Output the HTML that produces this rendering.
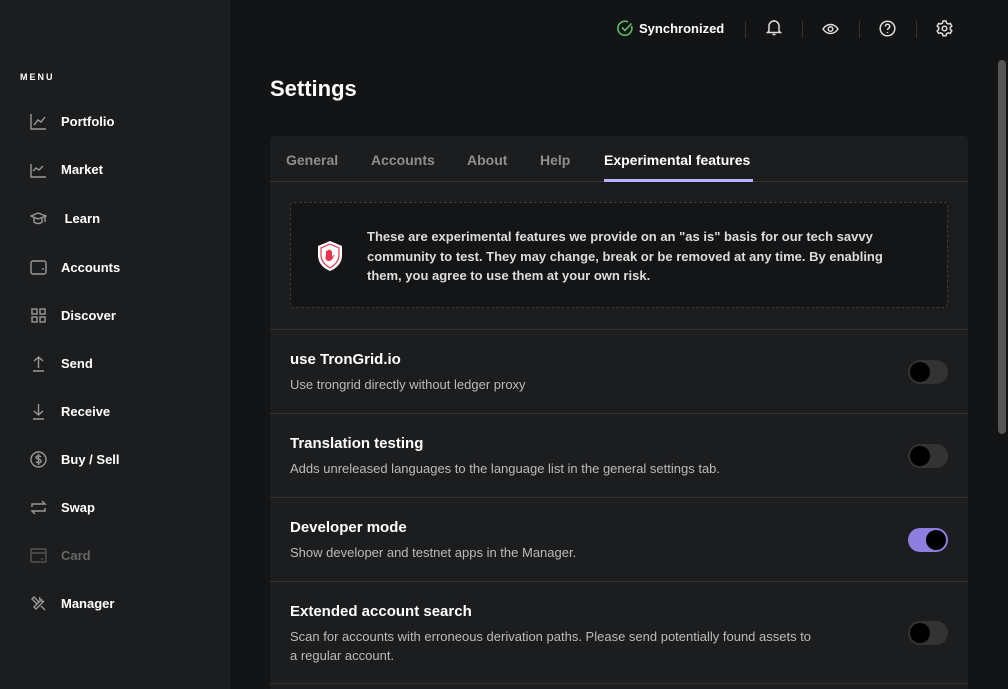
<!DOCTYPE html>
<html style="width:1008px;height:689px;overflow:hidden"><head><meta charset="utf-8"><style>
*{box-sizing:border-box;margin:0;padding:0}
body{width:1008px;height:689px;overflow:hidden;background:#131416;font-family:"Liberation Sans",sans-serif;color:#fff;position:relative}
.side{position:absolute;left:0;top:0;width:230px;height:689px;background:#1c1d1f}
.menu{position:absolute;left:20px;top:72px;font-size:9px;font-weight:bold;letter-spacing:2px}
.it{position:absolute;left:30px;height:20px;display:flex;align-items:center;font-size:13px;font-weight:bold;color:#fff}
.it svg{width:17px;height:17px;margin-right:14px;stroke:#999;fill:none;stroke-width:1.4}
.top{position:absolute;top:18px;display:flex;align-items:center}
.sep{position:absolute;top:21px;width:1px;height:17px;background:#333}
h1{position:absolute;left:270px;top:76px;font-size:22px;font-weight:bold}
.card{position:absolute;left:270px;top:136px;width:698px;height:553px;background:#1c1d1f;border-radius:4px 4px 0 0;overflow:hidden}
.tabs{height:46px;border-bottom:1px solid #333;position:relative}
.tab{position:absolute;top:16px;font-size:14px;font-weight:bold;color:#8e8e8e}
.tab.a{color:#fff}
.ul{position:absolute;left:334px;top:43px;width:149px;height:3px;background:#bbb0ff}
.note{position:absolute;left:20px;top:66px;width:658px;height:106px;border:1px dashed #3a3a3a;border-radius:4px;background:#141517}
.note p{position:absolute;left:76px;top:24px;width:540px;font-size:13px;line-height:19.5px;font-weight:bold;color:#ddd}
.row{position:absolute;left:0;width:698px;border-top:1px solid #333}
.row b{position:absolute;left:20px;top:21px;font-size:15px}
.row span{position:absolute;left:20px;top:45px;font-size:13px;color:#bbb;line-height:19px;width:530px}
.tg{position:absolute;left:638px;width:40px;height:24px;border-radius:12px;background:#333}
.tg i{position:absolute;left:2px;top:2px;width:20px;height:20px;border-radius:50%;background:#000}
.tg.on{background:#8e7ee0}.tg.on i{left:18px}
.sb{position:absolute;left:998px;top:60px;width:8px;height:374px;background:#555;border-radius:4px}
</style></head><body>
<div class="side">
<div class="menu">MENU</div>
<div class="it" style="top:111px"><svg viewBox="0 0 17 17"><path d="M1 1v15h15M4 12l4-5 3 2 4-5"/></svg>Portfolio</div>
<div class="it" style="top:159px"><svg viewBox="0 0 17 17"><path d="M1 3v13h15M3 10l3-3 3 2 4-4"/></svg>Market</div>
<div class="it" style="top:208px"><svg viewBox="0 0 17 17"><path d="M1 6l7-3 8 3-8 3zM4 8v4c2 2 6 2 8 0V8M15 7v5"/></svg>&nbsp;Learn</div>
<div class="it" style="top:257px"><svg viewBox="0 0 17 17"><rect x="1" y="2" width="15" height="13" rx="2"/><path d="M12 10h2"/></svg>Accounts</div>
<div class="it" style="top:305px"><svg viewBox="0 0 17 17"><rect x="2" y="2" width="5" height="5"/><rect x="10" y="2" width="5" height="5"/><rect x="2" y="10" width="5" height="5"/><rect x="10" y="10" width="5" height="5"/></svg>Discover</div>
<div class="it" style="top:353px"><svg viewBox="0 0 17 17"><path d="M8.5 13V2M4 6l4.5-4 4.5 4M3 16h11"/></svg>Send</div>
<div class="it" style="top:401px"><svg viewBox="0 0 17 17"><path d="M8.5 1v11M4 8l4.5 4 4.5-4M3 16h11"/></svg>Receive</div>
<div class="it" style="top:449px"><svg viewBox="0 0 17 17"><circle cx="8.5" cy="8.5" r="7.5"/><path d="M11 6c-1-1.5-5-1.5-5 .5s5 1 5 3.5-4 2-5 .5M8.5 3v11"/></svg>Buy / Sell</div>
<div class="it" style="top:497px"><svg viewBox="0 0 17 17"><path d="M2 8V5h13l-3-3M15 9v3H2l3 3"/></svg>Swap</div>
<div class="it" style="top:545px;color:#666"><svg viewBox="0 0 17 17" style="stroke:#555"><rect x="1" y="2" width="15" height="13" rx="1"/><path d="M1 6h15M11 12h2"/></svg>Card</div>
<div class="it" style="top:593px"><svg viewBox="0 0 17 17"><path d="M2 4l2-2 5 5-2 2zM10 2a3 3 0 004 4l-8 8-2-2 8-8M11 11l4 4"/></svg>Manager</div>
</div>
<div class="top" style="left:617px;top:20px;font-size:13px;font-weight:bold"><svg width="16" height="16" viewBox="0 0 16 16" style="margin-right:6px" fill="none" stroke="#5fbd5f" stroke-width="1.6"><path d="M14.5 6A7 7 0 1 1 11 2"/><path d="M5 7.5l3 3 6.5-7"/></svg>Synchronized</div>
<div class="sep" style="left:745px"></div><div class="sep" style="left:802px"></div><div class="sep" style="left:859px"></div><div class="sep" style="left:916px"></div>
<svg style="position:absolute;left:766px;top:19px" width="16" height="17" viewBox="0 0 16 17" fill="none" stroke="#ddd" stroke-width="1.5"><path d="M3 12V7a5 5 0 0110 0v5l1.5 1.5h-13zM8 1v1M6.5 15.5h3"/></svg>
<svg style="position:absolute;left:822px;top:21px" width="17" height="16" viewBox="0 0 17 16" fill="none" stroke="#ddd" stroke-width="1.5"><path d="M1 8c4-6 11-6 15 0-4 6-11 6-15 0z"/><circle cx="8.5" cy="8" r="2.3"/></svg>
<svg style="position:absolute;left:879px;top:20px" width="17" height="17" viewBox="0 0 17 17" fill="none" stroke="#ddd" stroke-width="1.5"><circle cx="8.5" cy="8.5" r="7.3"/><path d="M6.3 6.5a2.2 2.2 0 114 1.2c-.8.7-1.8 1-1.8 2.3M8.5 12v1"/></svg>
<svg style="position:absolute;left:936px;top:20px" width="17" height="17" viewBox="0 0 17 17" fill="none" stroke="#ddd" stroke-width="1.5"><circle cx="8.5" cy="8.5" r="2.3"/><path d="M7 1h3l.5 2 1.8 1 2-.6 1.5 2.6-1.5 1.4v2l1.5 1.4-1.5 2.6-2-.6-1.8 1-.5 2H7l-.5-2-1.8-1-2 .6L1.2 11l1.5-1.4v-2L1.2 6l1.5-2.6 2 .6 1.8-1z"/></svg>
<h1>Settings</h1>
<div class="card">
<div class="tabs">
<div class="tab" style="left:16px">General</div>
<div class="tab" style="left:101px">Accounts</div>
<div class="tab" style="left:197px">About</div>
<div class="tab" style="left:270px">Help</div>
<div class="tab a" style="left:334px">Experimental features</div>
<div class="ul"></div>
</div>
<div class="note">
<svg style="position:absolute;left:25px;top:37px" width="28" height="32" viewBox="0 0 28 32"><path d="M14 1l12 5v9c0 8-5 13-12 16C7 28 2 23 2 15V6z" fill="#fff"/><path d="M14 4l9 4v7c0 6-4 10-9 13-5-3-9-7-9-13V8z" fill="none" stroke="#e8344e" stroke-width="1.2"/><path d="M10 15v-4h1.5v4V10h1.5v5V9.5h1.5v5.5V11h1.5v6l1.5-2 1 .5-2.5 4c-1 1-2 1.5-3.5 1.5-2 0-3-1.5-3-3.5z" fill="#e8344e"/></svg>
<p>These are experimental features we provide on an "as is" basis for our tech savvy community to test. They may change, break or be removed at any time. By enabling them, you agree to use them at your own risk.</p>
</div>
<div class="row" style="top:193px;height:84px"><b>use TronGrid.io</b><span>Use trongrid directly without ledger proxy</span><div class="tg" style="top:30px"><i></i></div></div>
<div class="row" style="top:277px;height:84px"><b>Translation testing</b><span>Adds unreleased languages to the language list in the general settings tab.</span><div class="tg" style="top:30px"><i></i></div></div>
<div class="row" style="top:361px;height:84px"><b>Developer mode</b><span>Show developer and testnet apps in the Manager.</span><div class="tg on" style="top:30px"><i></i></div></div>
<div class="row" style="top:445px;height:102px"><b>Extended account search</b><span>Scan for accounts with erroneous derivation paths. Please send potentially found assets to a regular account.</span><div class="tg" style="top:39px"><i></i></div></div>
<div class="row" style="top:547px;height:20px"></div>
</div>
<div class="sb"></div>
</body></html>
